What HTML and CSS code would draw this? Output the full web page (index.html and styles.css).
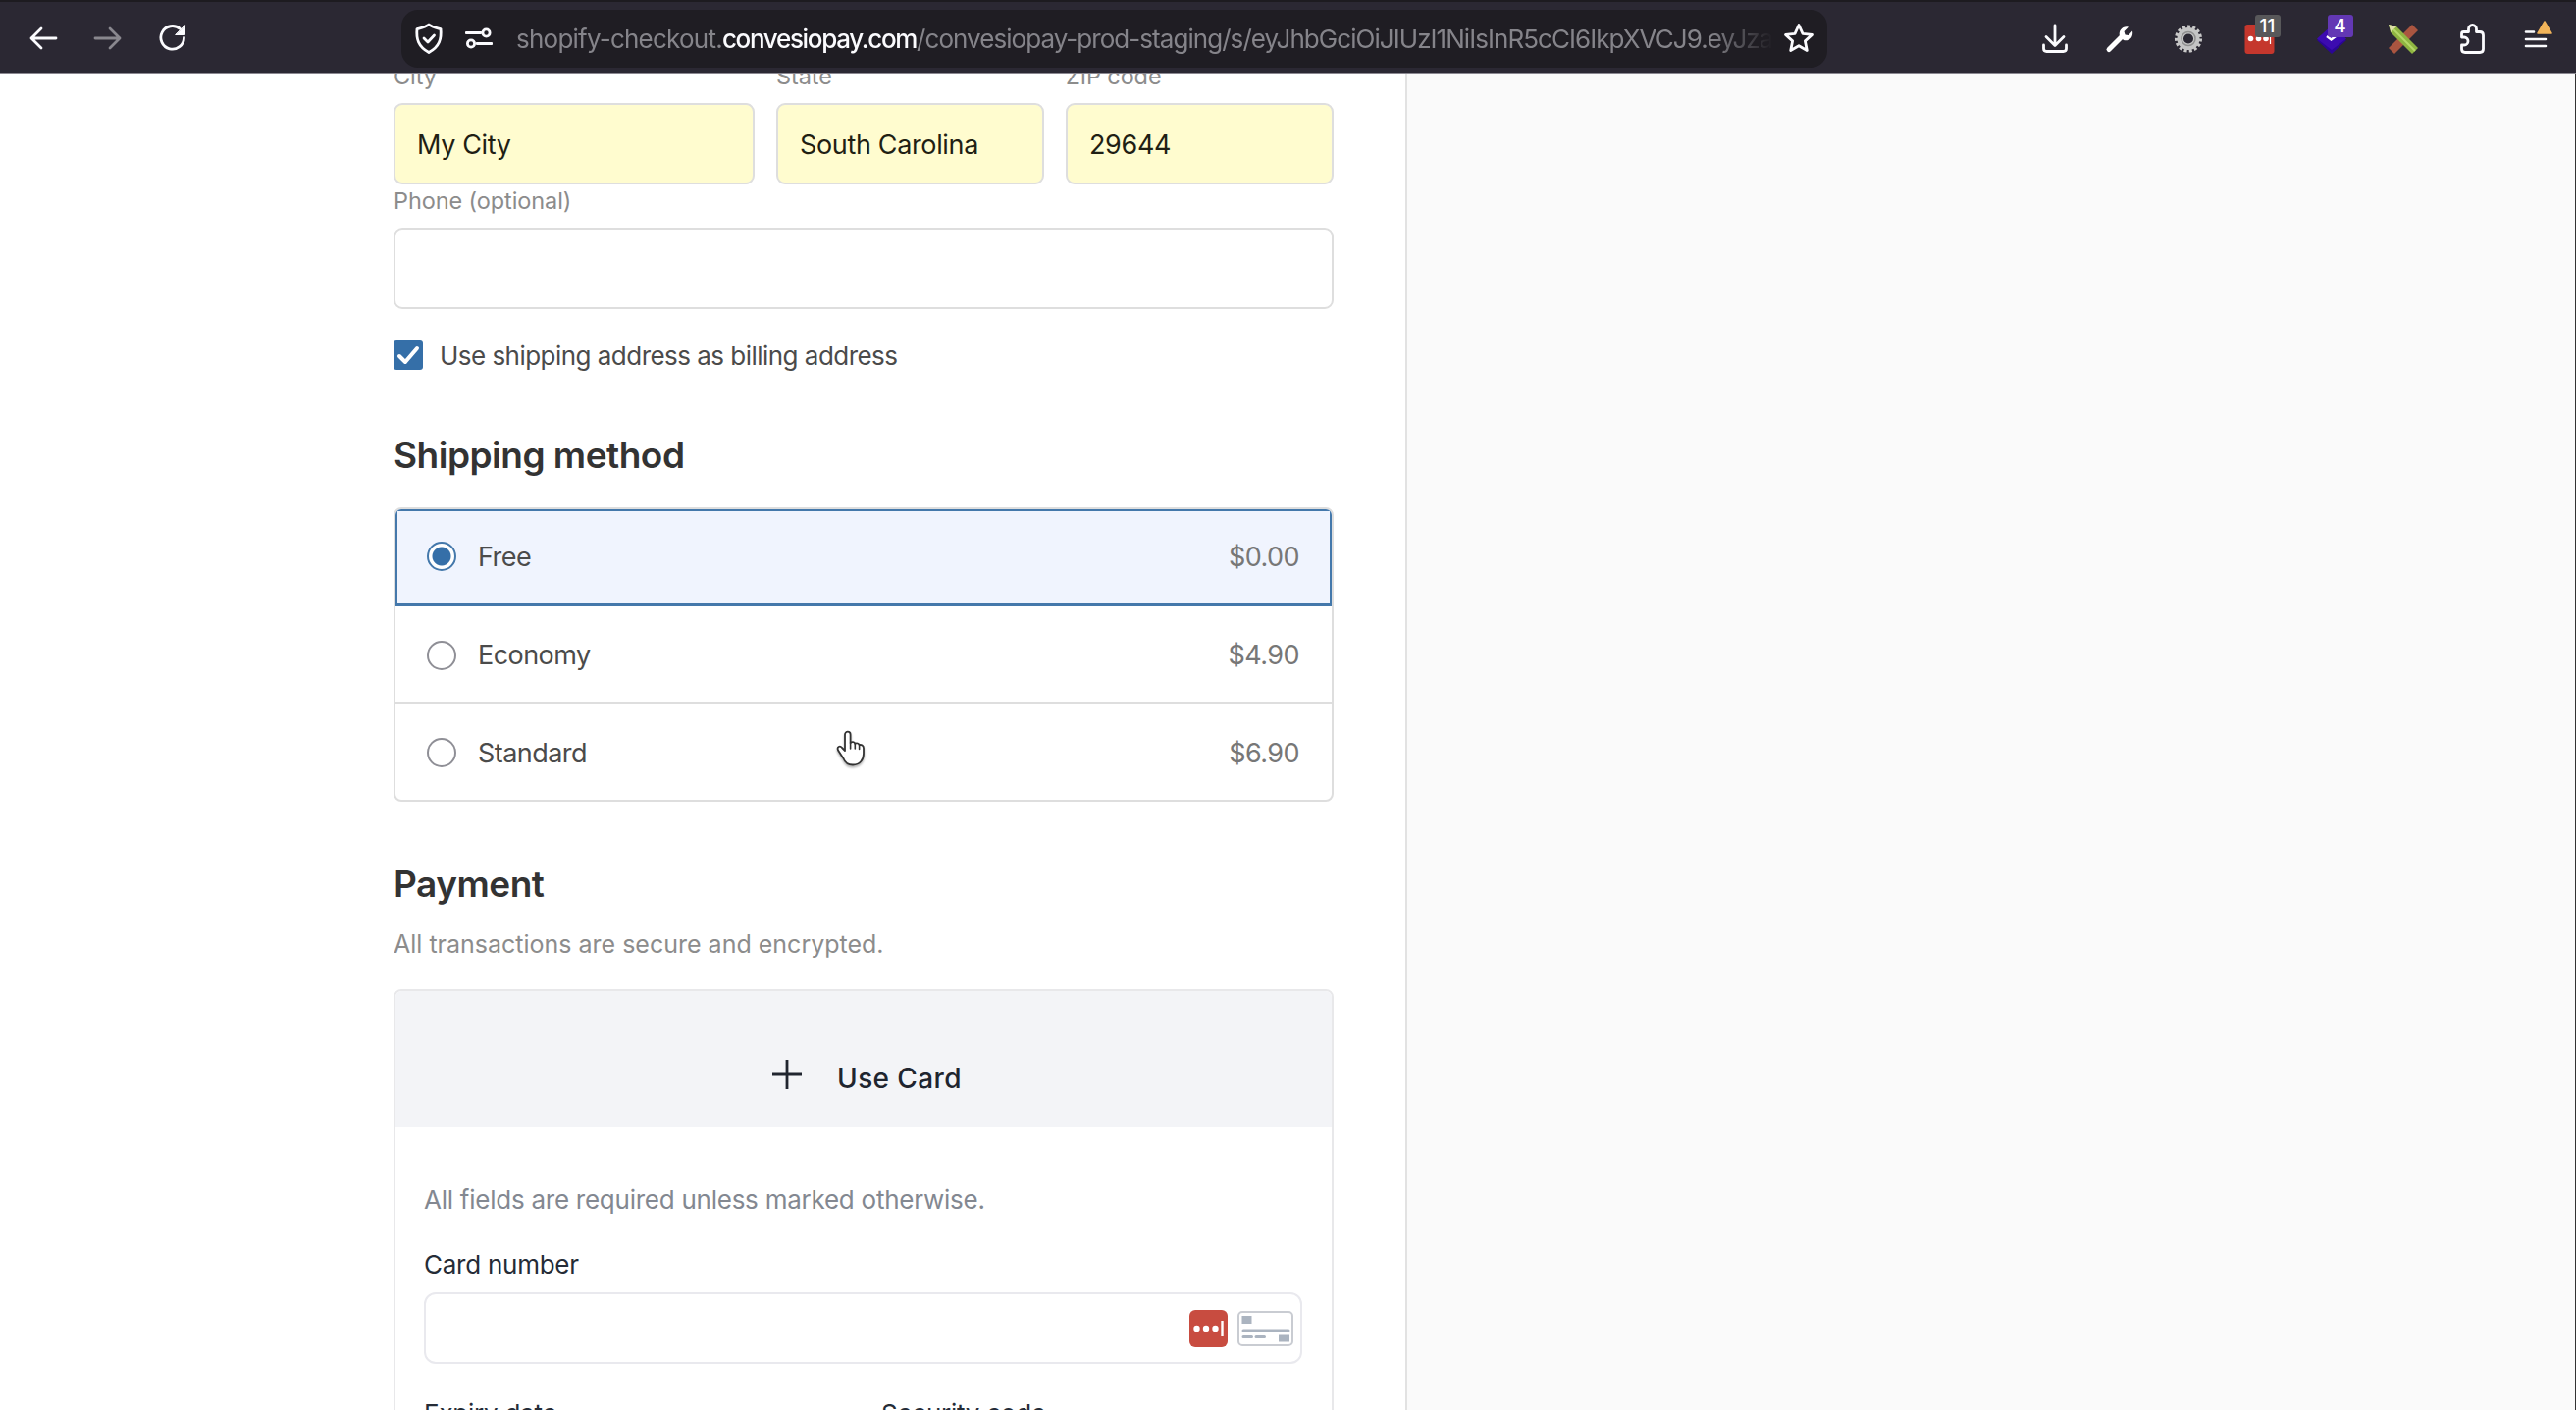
FILE: index.html
```html
<!DOCTYPE html>
<html lang="en">
<head>
  <meta charset="utf-8">
  <title>Checkout</title>
  <link rel="stylesheet" href="styles.css">
</head>
<body>
  <header class="toolbar">
    <div class="nav">
      <svg width="30" height="30" viewBox="0 0 30 30" class="line"><path d="M28 15H3M13 5L3 15l10 10"/></svg>
      <svg width="30" height="30" viewBox="0 0 30 30" class="line dim"><path d="M2 15h25M17 5l10 10-10 10"/></svg>
      <svg width="30" height="30" viewBox="0 0 30 30" class="line"><path d="M26.500 14.500A11.800 11.800 0 1 1 22.500 5.500"/><path class="solid" d="M27.500 2v9.500H18z"/></svg>
    </div>
    <div class="urlbar">
      <svg width="32" height="34" viewBox="0 0 32 34" class="line"><path d="M16 3c4 3 8 3.500 12 4.500 1 10-1 18-12 24C5 25.500 3 17.500 4 7.500 8 6.500 12 6 16 3z"/><path d="M11 17l4 4 6.500-7"/></svg>
      <svg width="28" height="24" viewBox="0 0 28 24" class="line perms"><path d="M1 6.500h15M12 17.500h15"/><circle cx="21.500" cy="6.500" r="3.600"/><circle cx="6" cy="17.500" r="3.600"/></svg>
      <div class="url"><span class="host">shopify-checkout.</span><b>convesiopay.com</b><span>/convesiopay-prod-staging/s/eyJhbGciOiJIUzI1NiIsInR5cCI6IkpXVCJ9.eyJza</span></div>
      <svg width="32" height="32" viewBox="0 0 32 32" class="line"><path d="M16 2.500l4 8.800 9.500 1.100-7.100 6.500 1.900 9.600-8.300-4.800-8.300 4.800 1.900-9.600-7.100-6.500 9.500-1.100z"/></svg>
    </div>
    <div class="extensions">
      <svg width="36" height="36" viewBox="0 0 36 36" class="line"><path d="M18 5v20M9 16.500l9 9 9-9M6.500 25v3.500q0 3 3 3h17q3 0 3-3V25"/></svg>
      <svg width="36" height="36" viewBox="0 0 36 36"><path d="M7 29.500L21 15.500" stroke="#fff" stroke-width="5" stroke-linecap="round"/><path d="M27 6.500l-4.500 4.500 1 3.500 3.500.5 4-4.500c1.500 7-4 11-9 9.500l-4-4c-1.500-6 3-11 9-9.500z" fill="#fff"/></svg>
      <svg width="36" height="36" viewBox="0 0 36 36"><circle cx="18" cy="18.500" r="12.300" fill="none" stroke="#c9c9c9" stroke-width="3.500" stroke-dasharray="3 2.150"/><circle cx="18" cy="18.500" r="8.300" fill="none" stroke="#c4c4c4" stroke-width="6.500"/><circle cx="18" cy="18.500" r="7" fill="none" stroke="#8f8f8f" stroke-width="1.500"/></svg>
      <div class="ext">
        <svg width="36" height="36" viewBox="0 0 36 36"><rect x="3.500" y="4" width="30" height="30" rx="3" fill="#c5372d"/><circle cx="9.500" cy="18.500" r="2.800" fill="#fff"/><circle cx="17.500" cy="18.500" r="2.800" fill="#fff"/><circle cx="25" cy="18.500" r="2.800" fill="#fff"/><path d="M29.500 16v8" stroke="#fff" stroke-width="1.200"/></svg>
        <span class="badge gray">11</span>
      </div>
      <div class="ext">
        <svg width="36" height="36" viewBox="0 0 36 36"><path d="M3 20L18 8l15 12-15 14z" fill="#2b0596"/><path d="M3 18.500L18 5l15 13.500L18 30z" fill="#3c0bb0"/><path d="M13 16l4.500 3.500L22 16" fill="none" stroke="#fff" stroke-width="2.500"/></svg>
        <span class="badge purple">4</span>
      </div>
      <svg width="36" height="36" viewBox="0 0 36 36"><path d="M27 4l6 6L9 34l-6-6z" fill="#aa5540"/><path d="M3 4l8 2 22 22-6 6L5 12z" fill="#8fb541"/><path d="M3 4l8 2-5.500 6z" fill="#dfe0a8"/><path d="M8 9l22 22" stroke="#b5d868" stroke-width="2"/></svg>
      <svg width="36" height="36" viewBox="0 0 36 36" class="line"><path d="M9.500 11.500h5V8.500a4 4 0 0 1 8 0v3h3.500q3.500 0 3.500 3.500v14q0 3.500-3.500 3.500H11q-3.500 0-3.500-3.500v-4h2.500a4 4 0 0 0 0-8H7.500v-3.500q0-2 2-2z"/></svg>
      <svg width="36" height="36" viewBox="0 0 36 36"><path d="M8 11.500h8M8 19h20M8 26h20" stroke="#fbfbfe" stroke-width="2.600" stroke-linecap="round"/><path d="M27 1l7 12H20z" fill="#f2b45a" stroke="#f2b45a" stroke-width="1.500" stroke-linejoin="round"/></svg>
    </div>
  </header>

  <div class="page">
    <main class="checkout">
      <div class="row">
        <div class="field">
          <label>City</label>
          <div class="input filled">My City</div>
        </div>
        <div class="field">
          <label>State</label>
          <div class="input filled">South Carolina</div>
        </div>
        <div class="field">
          <label>ZIP code</label>
          <div class="input filled">29644</div>
        </div>
      </div>
      <div class="field phone">
        <label>Phone (optional)</label>
        <div class="input"></div>
      </div>
      <div class="billing">
        <svg width="30" height="30" viewBox="0 0 30 30"><rect width="30" height="30" rx="3" fill="#356fa8"/><path d="M6 16l6 6L24 8" fill="none" stroke="#fff" stroke-width="4" stroke-linecap="round" stroke-linejoin="round"/></svg>
        <span>Use shipping address as billing address</span>
      </div>

      <h2>Shipping method</h2>
      <div class="methods">
        <div class="method selected"><i class="radio"></i><span>Free</span><span class="price">$0.00</span></div>
        <div class="method"><i class="radio"></i><span>Economy</span><span class="price">$4.90</span></div>
        <div class="method"><i class="radio"></i><span>Standard</span><span class="price">$6.90</span></div>
      </div>

      <h2 class="payment-title">Payment</h2>
      <p class="note">All transactions are secure and encrypted.</p>
      <div class="payment">
        <div class="use-card">
          <svg width="30" height="30" viewBox="0 0 30 30"><path d="M15 0v30M0 15h30" stroke="#20252f" stroke-width="2.800"/></svg>
          <span>Use Card</span>
        </div>
        <div class="card-form">
          <p class="required">All fields are required unless marked otherwise.</p>
          <p class="card-label">Card number</p>
          <div class="card-input">
            <svg width="39" height="38" viewBox="0 0 39 38"><rect width="39" height="38" rx="6" fill="#c84c40"/><circle cx="7.500" cy="19" r="3.200" fill="#fff"/><circle cx="17" cy="19" r="3.200" fill="#fff"/><circle cx="26.500" cy="19" r="3.200" fill="#fff"/><path d="M33.500 11v16" stroke="#fff" stroke-width="2.400"/></svg>
            <svg width="57" height="36" viewBox="0 0 57 36"><rect x="1" y="1" width="55" height="34" rx="4" fill="#fff" stroke="#c9ccd2" stroke-width="2"/><path d="M4.500 5h10v8h-10zM42 24.500h11v7H42z" fill="#abb4c0"/><path d="M6 20h46M6 26.500h8.500M19 26.500h8.500" stroke="#abb4c0" stroke-width="3" stroke-linecap="round"/></svg>
          </div>
          <div class="card-row">
            <p class="card-label">Expiry date</p>
            <p class="card-label">Security code</p>
          </div>
        </div>
      </div>
    </main>
    <aside class="summary"></aside>
  </div>

  <svg class="cursor" width="32" height="40" viewBox="0 0 32 40"><path d="M10 23V6.500a2.800 2.800 0 0 1 5.600 0V15c1.500-1.500 4-1 4.700.8 1.700-1 3.700-.3 4.300 1.400 2-.6 4.400.5 4.400 3.300V26c0 6-3.500 11.500-11 11.500-5 0-8-2.500-9.500-6.500L3 22.500c-1.500-3.500 2-5 4-2.500z" fill="#fff" stroke="#333" stroke-width="1.800" stroke-linejoin="round"/><path d="M15.600 15v6M20.300 16v5M24.600 17.500v4" stroke="#333" stroke-width="1.600" stroke-linecap="round"/></svg>
</body>
</html>
```
FILE: styles.css
```css
* {
  box-sizing: border-box;
}

body {
  margin: 0;
  height: 1437px;
  overflow: hidden;
  background: #fff;
  color: #4b4b4b;
  font-family: Inter, "Liberation Sans", sans-serif;
  font-size: 26px;
}

p, h2 {
  margin: 0;
}

svg {
  display: block;
  flex: none;
}

.line {
  fill: none;
  stroke: #fbfbfe;
  stroke-width: 2.8;
  stroke-linecap: round;
  stroke-linejoin: round;
}

.line .solid {
  fill: #fbfbfe;
  stroke-width: 1;
}

.dim {
  opacity: 0.45;
}

/* browser toolbar */
.toolbar {
  position: relative;
  z-index: 1;
  display: flex;
  align-items: center;
  height: 75px;
  padding: 2px 0 0 29px;
  background: #2b2833;
  border-top: 2px solid #1d1b20;
  border-bottom: 1px solid #8b8891;
}

.nav {
  display: flex;
  gap: 36px;
  width: 380px;
}

.urlbar {
  display: flex;
  align-items: center;
  width: 1453px;
  height: 59px;
  padding: 0 13px 0 12px;
  border-radius: 17px;
  background: #1f1d23;
}

.perms {
  margin-left: 21px;
}

.url {
  flex: 1;
  margin: 0 10px 0 24px;
  overflow: hidden;
  white-space: nowrap;
  color: #85848a;
  letter-spacing: -0.95px;
  -webkit-mask-image: linear-gradient(to right, #000 95%, transparent);
  mask-image: linear-gradient(to right, #000 95%, transparent);
}

.host {
  letter-spacing: -0.77px;
}

.url b {
  color: #fbfbfe;
  font-weight: 500;
  letter-spacing: -1.33px;
}

.extensions {
  display: grid;
  grid-template-columns: 65.5px 70px 72px 74px 73px 70px 65px 36px;
  margin-left: 214px;
}

.ext {
  position: relative;
}

.badge {
  position: absolute;
  top: -6px;
  left: 14px;
  width: 26px;
  height: 23px;
  border-radius: 3px;
  color: #fff;
  font-size: 19px;
  font-weight: 500;
  line-height: 23px;
  text-align: center;
}

.gray {
  background: #58585a;
}

.purple {
  background: #6338b4;
}

/* checkout */
.page {
  display: flex;
  height: 1362px;
}

.checkout {
  width: 1434px;
  height: 1362px;
  padding: 0 73px 0 401px;
  border-right: 2px solid #e2e2e2;
  overflow: hidden;
}

.summary {
  flex: 1;
  background: #fafafa;
  border-right: 1px solid #333;
}

.row {
  display: grid;
  grid-template-columns: 368px 273px 273px;
  gap: 22px;
  margin-top: -13px;
}

label {
  display: block;
  height: 43px;
  line-height: 31px;
  font-size: 23.5px;
  letter-spacing: -0.1px;
  color: #8c8c8c;
}

.input {
  display: flex;
  align-items: center;
  height: 83px;
  padding: 1px 22px 0;
  border: 2px solid #dedede;
  border-radius: 9px;
  background: #fff;
  font-size: 27px;
  letter-spacing: -0.35px;
}

.filled {
  background: #fffccf;
  color: #1f1f14;
}

.phone {
  margin-top: 1px;
}

.billing {
  display: flex;
  align-items: center;
  gap: 17px;
  height: 30px;
  margin-top: 32px;
  letter-spacing: -0.53px;
}

h2 {
  margin-top: 65px;
  font-size: 37px;
  line-height: 44px;
  font-weight: 600;
  letter-spacing: -0.5px;
  color: #333;
}

.methods {
  height: 300px;
  margin-top: 31px;
  border: 2px solid #dedede;
  border-radius: 8px;
  overflow: hidden;
}

.method {
  display: flex;
  align-items: center;
  height: 99px;
  padding: 2px 33px 0 32px;
  border-bottom: 2px solid #dedede;
  font-size: 27px;
  letter-spacing: -0.55px;
}

.method:last-child {
  height: 98px;
  border-bottom: none;
}

.method.selected {
  padding: 0 31px 2px 30px;
  border: 2px solid #4478ab;
  border-bottom-width: 3px;
  background: #f0f4fe;
}

.radio {
  width: 30px;
  height: 30px;
  margin-right: 22px;
  border: 2px solid #8f8f96;
  border-radius: 50%;
  background: #fff;
}

.selected .radio {
  border-color: #4478ab;
  background: radial-gradient(circle, #356fa8 9px, #fff 10px);
}

.price {
  margin-left: auto;
  color: #777;
}

.payment-title {
  margin-top: 62px;
}

.note {
  margin-top: 24px;
  line-height: 30px;
  font-size: 25px;
  color: #8c8c8c;
}

.payment {
  height: 500px;
  margin-top: 31px;
  border: 2px solid #e8e8ea;
  border-radius: 8px;
  overflow: hidden;
}

.use-card {
  display: flex;
  gap: 36px;
  height: 139px;
  padding: 70px 0 0 384px;
  background: #f3f4f7;
  font-size: 28px;
  line-height: 38px;
  font-weight: 500;
  letter-spacing: 0.4px;
  color: #20252f;
}

.card-form {
  padding: 59px 29px 0 29px;
  letter-spacing: -0.25px;
}

.required {
  line-height: 30px;
  color: #838891;
}

.card-label {
  margin-top: 36px;
  line-height: 30px;
  color: #252c37;
}

.card-input {
  display: flex;
  align-items: center;
  justify-content: flex-end;
  gap: 10px;
  width: 895px;
  height: 73px;
  margin-top: 13px;
  padding-right: 7px;
  border: 2px solid #e9e9ee;
  border-radius: 12px;
}

.card-row {
  display: grid;
  grid-template-columns: 466px 1fr;
}

.cursor {
  position: absolute;
  left: 851px;
  top: 742px;
  filter: drop-shadow(0 2px 1px rgba(0, 0, 0, 0.3));
}
```
